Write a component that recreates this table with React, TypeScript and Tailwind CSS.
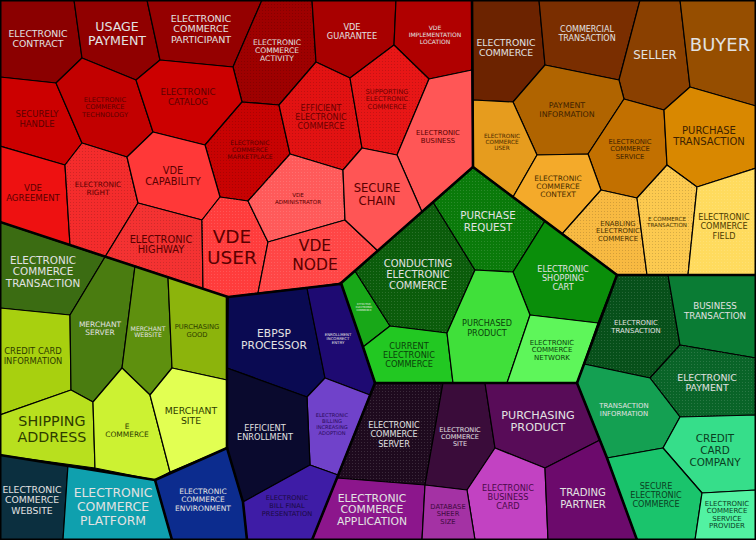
import React from 'react';

type Cell = {
  pts: string;
  fill: string;
  label: string[];
  x: number;
  y: number;
  size: number;
  lh?: number;
  color: string;
  dots?: 'dark' | 'light';
};

const L = '#e2e2e2';

const cells: Cell[] = [
  // red group
  { pts: '0,0 74,0 82,58 56,83 0,77', fill: '#8b0000', label: ['ELECTRONIC', 'CONTRACT'], x: 38, y: 38, size: 9.3, lh: 10, color: L },
  { pts: '74,0 147,0 160,60 136,80 82,58', fill: '#900000', label: ['USAGE', 'PAYMENT'], x: 117, y: 33, size: 12.6, lh: 14, color: L },
  { pts: '147,0 262,0 233,67 160,60', fill: '#950000', label: ['ELECTRONIC', 'COMMERCE', 'PARTICIPANT'], x: 201, y: 28, size: 9.5, lh: 10.5, color: L },
  { pts: '262,0 312,0 316,62 279,105 242,102 233,67', fill: '#9e0000', label: ['ELECTRONIC', 'COMMERCE', 'ACTIVITY'], x: 277, y: 50, size: 7.6, lh: 8, color: L, dots: 'dark' },
  { pts: '312,0 396,0 394,45 350,78 316,62', fill: '#a80000', label: ['VDE', 'GUARANTEE'], x: 352, y: 31, size: 8.2, lh: 9, color: L },
  { pts: '396,0 472,0 472,70 429,79 394,45', fill: '#b00000', label: ['VDE', 'IMPLEMENTATION', 'LOCATION'], x: 435, y: 34, size: 6, lh: 7, color: L },
  { pts: '0,77 56,83 82,143 65,165 0,146', fill: '#cc0000', label: ['SECURELY', 'HANDLE'], x: 37, y: 119, size: 8.5, lh: 9.3, color: '#5a0000' },
  { pts: '56,83 82,58 136,80 153,132 127,157 82,143', fill: '#c20000', label: ['ELECTRONIC', 'COMMERCE', 'TECHNOLOGY'], x: 105, y: 107, size: 6.7, lh: 7.5, color: '#5a0000' },
  { pts: '136,80 160,60 233,67 242,102 205,145 153,132', fill: '#cc0000', label: ['ELECTRONIC', 'CATALOG'], x: 188, y: 97, size: 8.7, lh: 9.5, color: '#5a0000' },
  { pts: '205,145 242,102 279,105 290,154 248,201 220,197', fill: '#c80202', label: ['ELECTRONIC', 'COMMERCE', 'MARKETPLACE'], x: 250, y: 149, size: 6.2, lh: 6.8, color: '#5a0000', dots: 'dark' },
  { pts: '279,105 316,62 350,78 362,148 343,170 290,154', fill: '#e21212', label: ['EFFICIENT', 'ELECTRONIC', 'COMMERCE'], x: 321, y: 117, size: 8.1, lh: 9, color: '#6a0000', dots: 'dark' },
  { pts: '350,78 394,45 429,79 397,155 362,148', fill: '#e81616', label: ['SUPPORTING', 'ELECTRONIC', 'COMMERCE'], x: 387, y: 99, size: 6.7, lh: 7.5, color: '#6a0000', dots: 'dark' },
  { pts: '429,79 472,70 473,167 422,212 397,155', fill: '#ff5656', label: ['ELECTRONIC', 'BUSINESS'], x: 438, y: 137, size: 6.9, lh: 8, color: '#5a0000' },
  { pts: '0,146 65,165 70,245 0,222', fill: '#ee1111', label: ['VDE', 'AGREEMENT'], x: 33, y: 193, size: 8.6, lh: 9.3, color: '#5a0000' },
  { pts: '65,165 82,143 127,157 138,203 105,257 70,245', fill: '#f42c2c', label: ['ELECTRONIC', 'RIGHT'], x: 98, y: 188, size: 7.3, lh: 8, color: '#5a0000', dots: 'dark' },
  { pts: '127,157 153,132 205,145 220,197 202,220 138,203', fill: '#ff3838', label: ['VDE', 'CAPABILITY'], x: 173, y: 175, size: 9.8, lh: 11, color: '#5a0000' },
  { pts: '138,203 202,220 203,289 105,257', fill: '#f43232', label: ['ELECTRONIC', 'HIGHWAY'], x: 161, y: 244, size: 9.9, lh: 10, color: '#5a0000', dots: 'dark' },
  { pts: '202,220 220,197 248,201 268,242 258,293 228,297 203,289', fill: '#ff3c3c', label: ['VDE', 'USER'], x: 232, y: 246, size: 18.5, lh: 21, color: '#5a0000', dots: 'light' },
  { pts: '248,201 290,154 343,170 345,220 268,242', fill: '#ff5a5a', label: ['VDE', 'ADMINISTRATOR'], x: 298, y: 198, size: 5.6, lh: 7, color: '#5a0000', dots: 'light' },
  { pts: '268,242 345,220 378,251 340,284 258,293', fill: '#ff4646', label: ['VDE', 'NODE'], x: 315, y: 255, size: 15.5, lh: 19, color: '#5a0000', dots: 'light' },
  { pts: '343,170 362,148 397,155 422,212 378,251 345,220', fill: '#ff5555', label: ['SECURE', 'CHAIN'], x: 377, y: 194, size: 11.6, lh: 13, color: '#5a0000' },

  // orange group
  { pts: '472,0 539,0 545,65 513,102 473,100', fill: '#6c2300', label: ['ELECTRONIC', 'COMMERCE'], x: 506, y: 47, size: 9.3, lh: 10, color: L },
  { pts: '539,0 640,0 619,80 545,65', fill: '#7a2e00', label: ['COMMERCIAL', 'TRANSACTION'], x: 587, y: 33, size: 8, lh: 9, color: L },
  { pts: '640,0 680,0 690,87 664,110 624,99 619,80', fill: '#8a4000', label: ['SELLER'], x: 655, y: 55, size: 11.7, color: L },
  { pts: '680,0 756,0 756,106 690,87', fill: '#964e00', label: ['BUYER'], x: 720, y: 44, size: 18, color: L },
  { pts: '545,65 619,80 624,99 588,154 537,155 513,102', fill: '#b06400', label: ['PAYMENT', 'INFORMATION'], x: 567, y: 109, size: 7.9, lh: 9, color: '#3e2200' },
  { pts: '473,100 513,102 537,155 513,197 473,167', fill: '#e69c1e', label: ['ELECTRONIC', 'COMMERCE', 'USER'], x: 502, y: 142, size: 5.7, lh: 6.2, color: '#4a2a00' },
  { pts: '624,99 664,110 667,165 637,198 601,190 588,154', fill: '#c27000', label: ['ELECTRONIC', 'COMMERCE', 'SERVICE'], x: 630, y: 149, size: 6.8, lh: 7.5, color: '#3e2200' },
  { pts: '664,110 690,87 756,106 756,168 697,187 667,165', fill: '#d98800', label: ['PURCHASE', 'TRANSACTION'], x: 709, y: 135, size: 10, lh: 11, color: '#3e2200' },
  { pts: '537,155 588,154 601,190 562,234 513,197', fill: '#f4aa2a', label: ['ELECTRONIC', 'COMMERCE', 'CONTEXT'], x: 558, y: 186, size: 7.5, lh: 8.2, color: '#4a2e00' },
  { pts: '601,190 637,198 647,275 617,275 562,234', fill: '#f8ba42', label: ['ENABLING', 'ELECTRONIC', 'COMMERCE'], x: 618, y: 231, size: 6.9, lh: 7.5, color: '#4a3000', dots: 'dark' },
  { pts: '637,198 667,165 697,187 688,275 647,275', fill: '#fcca50', label: ['E COMMERCE', 'TRANSACTION'], x: 667, y: 222, size: 5.6, lh: 6.5, color: '#4a3400', dots: 'dark' },
  { pts: '697,187 756,168 756,275 688,275', fill: '#ffdb5e', label: ['ELECTRONIC', 'COMMERCE', 'FIELD'], x: 724, y: 226, size: 8.1, lh: 9.5, color: '#4a3a00', dots: 'light' },

  // central green group
  { pts: '341,283 355,271 390,326 363,347', fill: '#18a818', label: ['EFFECTIVE', 'ELECTRONIC', 'COMMERCE'], x: 364, y: 307, size: 2.6, lh: 2.8, color: '#f0f0f0' },
  { pts: '355,271 433,202 475,270 447,333 390,326', fill: '#0b5c0b', label: ['CONDUCTING', 'ELECTRONIC', 'COMMERCE'], x: 418, y: 274, size: 10, lh: 11, color: L, dots: 'light' },
  { pts: '433,202 473,167 545,221 513,272 475,270', fill: '#0a7a0a', label: ['PURCHASE', 'REQUEST'], x: 488, y: 221, size: 10.3, lh: 11.5, color: L, dots: 'light' },
  { pts: '545,221 617,275 598,323 530,315 513,272', fill: '#0a8e0a', label: ['ELECTRONIC', 'SHOPPING', 'CART'], x: 563, y: 278, size: 8.1, lh: 9.3, color: L },
  { pts: '363,347 390,326 447,333 453,383 375,383', fill: '#22c822', label: ['CURRENT', 'ELECTRONIC', 'COMMERCE'], x: 409, y: 355, size: 8.2, lh: 8.7, color: '#0a400a' },
  { pts: '447,333 475,270 513,272 530,315 507,383 453,383', fill: '#40e03a', label: ['PURCHASED', 'PRODUCT'], x: 487, y: 328, size: 8.1, lh: 9.5, color: '#0a400a' },
  { pts: '530,315 598,323 577,383 507,383', fill: '#5ef65a', label: ['ELECTRONIC', 'COMMERCE', 'NETWORK'], x: 552, y: 350, size: 7, lh: 7.5, color: '#0a400a' },

  // dark green group
  { pts: '617,275 668,275 680,345 650,378 584,364', fill: '#07501a', label: ['ELECTRONIC', 'TRANSACTION'], x: 636, y: 327, size: 6.9, lh: 8, color: L, dots: 'light' },
  { pts: '668,275 756,275 756,358 680,345', fill: '#0a7c34', label: ['BUSINESS', 'TRANSACTION'], x: 715, y: 311, size: 8.7, lh: 9.5, color: L },
  { pts: '680,345 756,358 756,415 680,417 650,378', fill: '#096428', label: ['ELECTRONIC', 'PAYMENT'], x: 707, y: 382, size: 9.4, lh: 10.5, color: L, dots: 'light' },
  { pts: '584,364 650,378 680,417 663,448 607,458 577,383', fill: '#14a052', label: ['TRANSACTION', 'INFORMATION'], x: 624, y: 410, size: 6.9, lh: 7.5, color: L },
  { pts: '680,417 756,415 756,490 702,493 663,448', fill: '#36de8a', label: ['CREDIT', 'CARD', 'COMPANY'], x: 715, y: 450, size: 10.4, lh: 12, color: '#0a3e22' },
  { pts: '607,458 663,448 702,493 695,540 637,540', fill: '#1ac46c', label: ['SECURE', 'ELECTRONIC', 'COMMERCE'], x: 656, y: 495, size: 8.1, lh: 9, color: '#0a3e22' },
  { pts: '702,493 756,490 756,540 695,540', fill: '#52f2a2', label: ['ELECTRONIC', 'COMMERCE', 'SERVICE', 'PROVIDER'], x: 727, y: 515, size: 7, lh: 7.6, color: '#0a3e22' },

  // purple group
  { pts: '375,383 443,383 425,485 337,478', fill: '#1e0a1e', label: ['ELECTRONIC', 'COMMERCE', 'SERVER'], x: 394, y: 434, size: 8.1, lh: 9.5, color: L, dots: 'light' },
  { pts: '443,383 485,383 495,448 467,490 425,485', fill: '#3a0c3a', label: ['ELECTRONIC', 'COMMERCE', 'SITE'], x: 460, y: 437, size: 6.5, lh: 7, color: L },
  { pts: '485,383 577,383 600,440 545,468 495,448', fill: '#580c58', label: ['PURCHASING', 'PRODUCT'], x: 538, y: 421, size: 11.2, lh: 12, color: L },
  { pts: '495,448 545,468 548,540 475,540 467,490', fill: '#c242c2', label: ['ELECTRONIC', 'BUSINESS', 'CARD'], x: 508, y: 497, size: 8.2, lh: 9, color: '#4a0a4a' },
  { pts: '545,468 600,440 607,458 637,540 548,540', fill: '#6c0a6c', label: ['TRADING', 'PARTNER'], x: 583, y: 498, size: 10.1, lh: 11.5, color: L },
  { pts: '337,478 425,485 422,540 312,540', fill: '#8c168c', label: ['ELECTRONIC', 'COMMERCE', 'APPLICATION'], x: 372, y: 509, size: 10.8, lh: 11.5, color: L },
  { pts: '425,485 467,490 475,540 422,540', fill: '#a432a4', label: ['DATABASE', 'SHEER', 'SIZE'], x: 448, y: 514, size: 6.8, lh: 7.5, color: '#3e0a3e' },

  // dark blue group
  { pts: '228,297 307,288 325,378 307,397 227,368', fill: '#0a0a52', label: ['EBPSP', 'PROCESSOR'], x: 274, y: 339, size: 10.7, lh: 11.5, color: L },
  { pts: '307,288 341,283 363,347 375,383 370,395 325,378', fill: '#1e0a72', label: ['ENROLLMENT', 'INCORRECT', 'ENTRY'], x: 338, y: 338, size: 3.9, lh: 4.3, color: L },
  { pts: '325,378 370,395 338,475 310,465 307,397', fill: '#7042ca', label: ['ELECTRONIC', 'BILLING', 'INCREASING', 'ADOPTION'], x: 332, y: 424, size: 5.1, lh: 5.8, color: '#2a0a5a' },
  { pts: '227,368 307,397 310,465 243,502 227,448', fill: '#0a0a2e', label: ['EFFICIENT', 'ENROLLMENT'], x: 265, y: 432, size: 8.2, lh: 9, color: L },
  { pts: '243,502 310,465 338,475 337,478 312,540 247,540', fill: '#3e1ca6', label: ['ELECTRONIC', 'BILL FINAL', 'PRESENTATION'], x: 287, y: 506, size: 6.7, lh: 8, color: '#1a0a40' },
  { pts: '155,480 227,448 243,502 247,540 172,540', fill: '#0c2c8e', label: ['ELECTRONIC', 'COMMERCE', 'ENVIRONMENT'], x: 203, y: 499, size: 7.5, lh: 8.5, color: L },

  // bottom-left group
  { pts: '0,455 68,465 63,540 0,540', fill: '#0b2f3f', label: ['ELECTRONIC', 'COMMERCE', 'WEBSITE'], x: 32, y: 499, size: 9.3, lh: 10.5, color: L },
  { pts: '68,465 155,480 172,540 63,540', fill: '#0fa0ae', label: ['ELECTRONIC', 'COMMERCE', 'PLATFORM'], x: 113, y: 506, size: 12.4, lh: 14, color: L },

  // olive group
  { pts: '0,222 105,257 70,315 0,308', fill: '#3b6c12', label: ['ELECTRONIC', 'COMMERCE', 'TRANSACTION'], x: 43, y: 271, size: 10.4, lh: 11.5, color: L },
  { pts: '0,308 70,315 71,390 0,415', fill: '#a8d00f', label: ['CREDIT CARD', 'INFORMATION'], x: 33, y: 356, size: 8.4, lh: 10, color: '#2e3c00' },
  { pts: '105,257 135,266 122,368 93,402 71,390 70,315', fill: '#4a7c10', label: ['MERCHANT', 'SERVER'], x: 100, y: 328, size: 7.5, lh: 8.3, color: L },
  { pts: '135,266 168,277 172,368 150,395 122,368', fill: '#5e900e', label: ['MERCHANT', 'WEBSITE'], x: 148, y: 331, size: 6.2, lh: 6.8, color: L },
  { pts: '168,277 228,297 227,380 172,368', fill: '#8cb40c', label: ['PURCHASING', 'GOOD'], x: 197, y: 331, size: 6.8, lh: 7.5, color: '#2e3c00' },
  { pts: '0,415 71,390 93,402 95,468 0,455', fill: '#b8e01e', label: ['SHIPPING', 'ADDRESS'], x: 52, y: 429, size: 14.3, lh: 16, color: '#2e3c00' },
  { pts: '93,402 122,368 150,395 170,472 155,480 95,468', fill: '#ccf232', label: ['E', 'COMMERCE'], x: 127, y: 430, size: 7.5, lh: 8.3, color: '#2e3c00' },
  { pts: '150,395 172,368 227,380 227,448 170,472', fill: '#e2ff52', label: ['MERCHANT', 'SITE'], x: 191, y: 415, size: 9.3, lh: 10, color: '#2e3c00' },
];

const thick = [
  '472,0 473,167',
  '340,284 473,167 617,275 756,275',
  '617,275 577,383 607,458 637,540',
  '375,383 577,383',
  '341,283 363,347 375,383 337,478 312,540',
  '0,222 228,297 340,284',
  '227,297 227,448',
  '0,455 155,480 227,448',
  '155,480 172,540',
  '227,448 243,502 247,540',
];

const Label: React.FC<{ c: Cell }> = ({ c }) => {
  const lh = c.lh ?? c.size * 1.1;
  const n = c.label.length;
  return (
    <text
      textAnchor="middle"
      dominantBaseline="central"
      fontSize={c.size}
      fill={c.color}
      style={{ fontFamily: '"DejaVu Sans", Verdana, sans-serif' }}
    >
      {c.label.map((line, i) => (
        <tspan key={i} x={c.x} y={c.y + (i - (n - 1) / 2) * lh}>
          {line}
        </tspan>
      ))}
    </text>
  );
};

export default function App() {
  return (
    <div className="w-[756px] h-[540px] bg-black overflow-hidden">
      <svg width="756" height="540" viewBox="0 0 756 540" className="block">
        <defs>
          <pattern id="dots-dark" width="3" height="3" patternUnits="userSpaceOnUse">
            <rect x="1" y="1" width="1" height="1" fill="#000" opacity="0.15" />
          </pattern>
          <pattern id="dots-light" width="3" height="3" patternUnits="userSpaceOnUse">
            <rect x="1" y="1" width="1" height="1" fill="#fff" opacity="0.13" />
          </pattern>
        </defs>
        {cells.map((c, i) => (
          <g key={i}>
            <polygon points={c.pts} fill={c.fill} stroke="#000" strokeWidth={1.2} strokeLinejoin="round" />
            {c.dots && <polygon points={c.pts} fill={`url(#dots-${c.dots})`} />}
          </g>
        ))}
        {thick.map((p, i) => (
          <polyline key={i} points={p} fill="none" stroke="#000" strokeWidth={2.6} strokeLinejoin="round" strokeLinecap="round" />
        ))}
        {cells.map((c, i) => (
          <Label key={i} c={c} />
        ))}
        <rect x="0.75" y="0.75" width="754.5" height="538.5" fill="none" stroke="#000" strokeWidth={1.5} />
      </svg>
    </div>
  );
}
